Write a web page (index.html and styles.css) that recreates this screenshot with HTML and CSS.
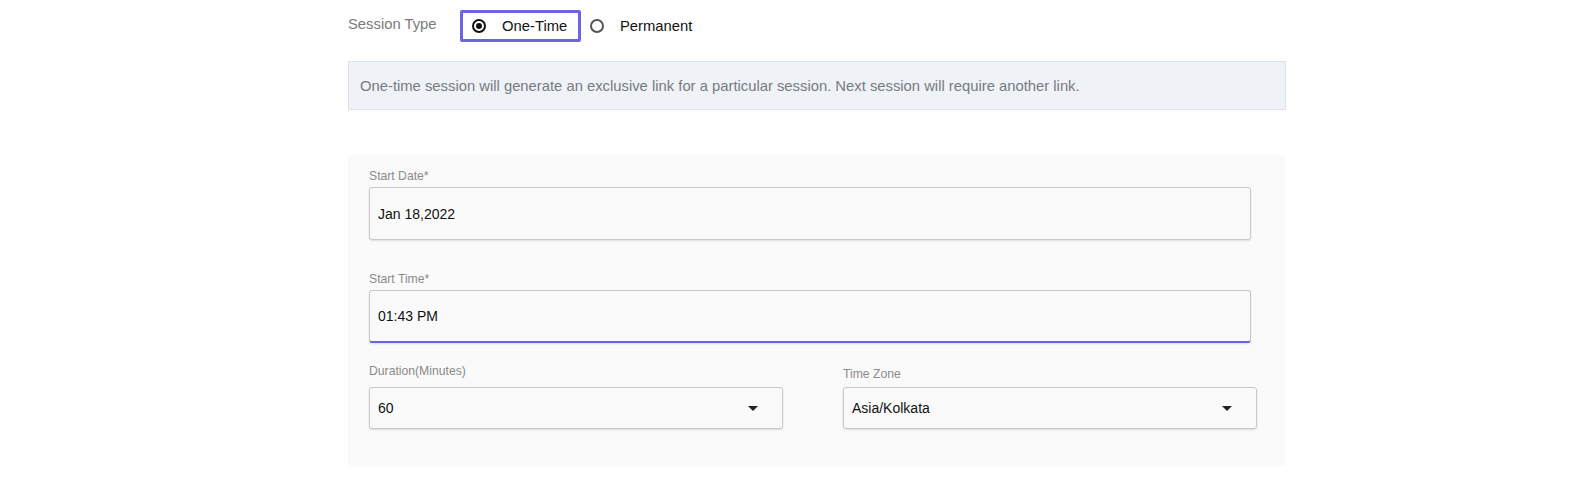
FILE: index.html
```html
<!DOCTYPE html>
<html>
<head>
<meta charset="utf-8">
<link rel="stylesheet" href="styles.css">
</head>
<body>
<div class="page">
  <div class="session-row">
    <span class="session-label">Session Type</span>
    <div class="option selected">
      <span class="radio checked"></span>
      <span class="option-text">One-Time</span>
    </div>
    <div class="option">
      <span class="radio"></span>
      <span class="option-text">Permanent</span>
    </div>
  </div>
  <div class="info">One-time session will generate an exclusive link for a particular session. Next session will require another link.</div>
  <div class="panel">
    <div class="field">
      <div class="label">Start Date*</div>
      <div class="input">Jan 18,2022</div>
    </div>
    <div class="field field-gap">
      <div class="label">Start Time*</div>
      <div class="input focused">01:43 PM</div>
    </div>
    <div class="row">
      <div class="col">
        <div class="label label-dur">Duration(Minutes)</div>
        <div class="select"><span>60</span><span class="caret"></span></div>
      </div>
      <div class="col">
        <div class="label label-tz">Time Zone</div>
        <div class="select"><span>Asia/Kolkata</span><span class="caret"></span></div>
      </div>
    </div>
  </div>
</div>
</body>
</html>
```

FILE: styles.css
```css
* { box-sizing: border-box; }
body {
  margin: 0;
  background: #ffffff;
  font-family: "Liberation Sans", Arial, sans-serif;
  color: #111;
}
.page {
  margin-left: 348px;
  width: 938px;
}
.session-row {
  display: flex;
  align-items: center;
  padding-top: 10px;
  height: 42px;
}
.session-label {
  width: 112px;
  font-size: 14.8px;
  color: #7a7a7a;
  margin-top: -4px;
}
.option {
  display: flex;
  align-items: center;
  height: 32px;
  font-size: 14.8px;
  color: #111;
}
.option.selected {
  width: 121px;
  border: 3px solid #6a66e3;
  border-radius: 2px;
  padding-left: 9px;
}
.option:not(.selected) {
  padding-left: 9px;
}
.radio {
  width: 14px;
  height: 14px;
  border: 2px solid #555;
  border-radius: 50%;
  display: inline-flex;
  align-items: center;
  justify-content: center;
  margin-right: 16px;
}
.radio.checked {
  border-color: #111;
}
.radio.checked::after {
  content: "";
  width: 6px;
  height: 6px;
  border-radius: 50%;
  background: #111;
}
.info {
  margin-top: 19px;
  height: 49px;
  background: #eff2f7;
  border: 1px solid #dfe2e7;
  padding-left: 11px;
  display: flex;
  align-items: center;
  font-size: 14.8px;
  color: #767b84;
}
.panel {
  margin-top: 45px;
  background: #fafafa;
  padding: 14px 0 37px 21px;
}
.label {
  font-size: 12.2px;
  line-height: 14px;
  color: #8a8a8a;
  margin-bottom: 4px;
}
.field-gap {
  margin-top: 32px;
}
.input {
  width: 882px;
  height: 53px;
  border: 1px solid #c9c9c9;
  border-radius: 3px;
  background: #fafafa;
  box-shadow: 0 1px 2px rgba(0,0,0,0.12);
  display: flex;
  align-items: center;
  padding-left: 8px;
  font-size: 14px;
  color: #111;
}
.input.focused {
  border-bottom: 2px solid #6a66e3;
}
.row {
  display: flex;
  gap: 60px;
  margin-top: 21px;
}
.col {
  width: 414px;
}
.label-dur { margin-bottom: 9px; }
.label-tz { margin-top: 3px; margin-bottom: 6px; }
.select {
  height: 42px;
  border: 1px solid #c9c9c9;
  border-radius: 3px;
  background: #fafafa;
  box-shadow: 0 1px 2px rgba(0,0,0,0.12);
  display: flex;
  align-items: center;
  justify-content: space-between;
  padding: 0 24px 0 8px;
  font-size: 14px;
  color: #111;
}
.caret {
  width: 0;
  height: 0;
  border-left: 5px solid transparent;
  border-right: 5px solid transparent;
  border-top: 5px solid #222;
}
```
